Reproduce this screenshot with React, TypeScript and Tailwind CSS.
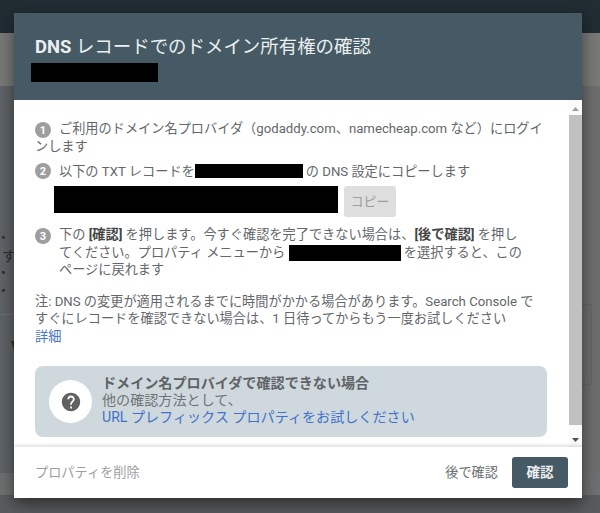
import { MdHelp } from "react-icons/md";

const font = "font-['Roboto','Noto_Sans_CJK_JP',sans-serif]";

function Num({ n }: { n: number }) {
  return (
    <span className="flex h-[16px] w-[16px] shrink-0 items-center justify-center rounded-full bg-[#9e9e9e] text-[11px] font-bold leading-none text-white">
      {n}
    </span>
  );
}

function Black({ w, h = 14 }: { w: number; h?: number }) {
  return <span className="inline-block bg-black align-middle" style={{ width: w, height: h }} />;
}

function Backdrop() {
  return (
    <div className="flex h-[513px] w-[600px] flex-col bg-[#5e6264]">
      <div className="h-[33px] shrink-0 bg-[#212d33]" />
      <div className="h-[53px] shrink-0 bg-[#7a7a78]" />
      <div className="flex min-h-0 flex-1">
        <div className="flex-1 bg-[#5f6468] pl-[1px] pt-[143px] text-[14px] leading-[18px] text-[#2a2c2e]">
          <div className="h-[18px]">•</div>
          <div className="h-[17px] pl-[1px]">す</div>
          <div className="h-[18px]">•</div>
          <div className="h-[18px]">•</div>
          <div className="mt-[14px] h-px w-full bg-[#6f7274]" />
          <div className="mt-[24px] pl-[10px] text-[16px] font-bold">V</div>
        </div>
        <div className="w-[18px] shrink-0 bg-[#6e6e6e] pt-[218px]">
          <div className="h-[81px] w-[10px] rounded-r-[3px] border border-l-0 border-[#656565]" />
        </div>
      </div>
      <div className="h-[22px] shrink-0 bg-[#6f7071]" />
      <div className="h-[18px] shrink-0 bg-[#5a5b5c]" />
    </div>
  );
}

export default function App() {
  return (
    <div className={`relative h-[513px] w-[600px] overflow-hidden ${font}`}>
      <Backdrop />
      <div className="absolute left-[14px] top-[13px] flex h-[485px] w-[568px] flex-col bg-white shadow-[0_6px_16px_rgba(0,0,0,0.5)]">
        <div className="h-[87px] shrink-0 bg-[#455a64] pl-[21px] pt-[22px]">
          <h1 className="text-[18.45px] leading-[24px] text-[#eceff1]">
            <b className="font-bold">DNS</b> レコードでのドメイン所有権の確認
          </h1>
          <div className="ml-[-4px] mt-[4px] h-[19px] w-[127px] bg-black" />
        </div>

        <div className="flex min-h-0 flex-1">
          <div className="flex-1 pl-[21px] pr-[22px] pt-[20px] text-[13.2px] leading-[17.5px] text-[#63676b]">
            <div className="flex gap-[8px]">
              <span className="mt-[2px]"><Num n={1} /></span>
              <span>ご利用のドメイン名プロバイダ（godaddy.com、namecheap.com など）にログイ</span>
            </div>
            <div>ンします</div>
            <div className="mt-[7px] flex items-center gap-[8px]">
              <Num n={2} />
              <span className="flex items-center">
                以下の TXT レコードを<Black w={108} /><span className="ml-[3px]">の DNS 設定にコピーします</span>
              </span>
            </div>
            <div className="ml-[19px] mt-[6px] flex items-start gap-[6px]">
              <Black w={284} h={27} />
              <button className="h-[31px] w-[52px] rounded-[3px] bg-[#dedede] text-[13px] text-[#9e9e9e]">コピー</button>
            </div>
            <div className="mt-[9px] flex gap-[8px]">
              <span className="mt-[2px]"><Num n={3} /></span>
              <div>
                下の <b className="font-bold text-[#444]">[確認]</b> を押します。今すぐ確認を完了できない場合は、<b className="font-bold text-[#444]">[後で確認]</b> を押し
                <br />
                てください。プロパティ メニューから <Black w={112} h={16} /> を選択すると、この
                <br />
                ページに戻れます
              </div>
            </div>
            <p className="mt-[14px]">
              注: DNS の変更が適用されるまでに時間がかかる場合があります。Search Console で
              <br />
              すぐにレコードを確認できない場合は、1 日待ってからもう一度お試しください
            </p>
            <a className="block text-[#4a76c8]">詳細</a>
            <div className="mt-[21px] flex h-[71px] items-center gap-[10px] rounded-[8px] bg-[#cfd8dc] pl-[14px] text-[14.1px] leading-[17px]">
              <div className="flex h-[43px] w-[43px] items-center justify-center rounded-full bg-white">
                <MdHelp size={22} className="text-[#616161]" />
              </div>
              <div className="mt-[-2px]">
                <div className="font-bold text-[#5f6368]">ドメイン名プロバイダで確認できない場合</div>
                <div className="text-[#6f7478]">他の確認方法として、</div>
                <a className="text-[#3f72cc]">URL プレフィックス プロパティをお試しください</a>
              </div>
            </div>
          </div>

          <div className="flex w-[13px] shrink-0 flex-col items-center bg-[#fafafa]">
            <svg width="7" height="4" viewBox="0 0 7 4" className="mt-[7px]"><path d="M3.5 0L7 4H0z" fill="#a0a0a0" /></svg>
            <div className="mt-[4px] h-[310px] w-full bg-[#c1c1c1]" />
            <svg width="7" height="4" viewBox="0 0 7 4" className="mt-[13px]"><path d="M0 0h7L3.5 4z" fill="#505050" /></svg>
          </div>
        </div>

        <div className="flex h-[51px] shrink-0 items-center justify-between pl-[21px] pr-[14px] shadow-[0_-2px_3px_rgba(0,0,0,0.12)]">
          <span className="text-[13.2px] text-[#9e9e9e]">プロパティを削除</span>
          <div className="flex items-center gap-[14px]">
            <span className="text-[13.2px] text-[#6b6f73]">後で確認</span>
            <button className="h-[31px] w-[56px] rounded-[3px] bg-[#455a64] text-[13.5px] font-bold text-[#eceff1]">確認</button>
          </div>
        </div>
      </div>
    </div>
  );
}
